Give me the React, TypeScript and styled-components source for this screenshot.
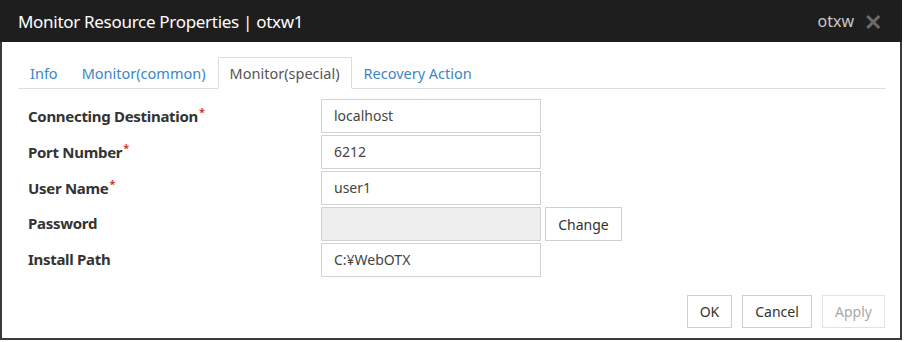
import * as React from 'react';
import styled, { createGlobalStyle } from 'styled-components';

const GlobalStyle = createGlobalStyle`
    html, body {
        margin: 0;
        padding: 0;
        background: #fff;
    }
    body {
        font-family: "Noto Sans", "Liberation Sans", sans-serif;
        color: #333;
    }
`;

const Dialog = styled.div`
    width: 902px;
    height: 340px;
    box-sizing: border-box;
    border: 2px solid #3a3a3a;
    border-top: none;
    display: flex;
    flex-direction: column;
    background: #fff;
`;

const TitleBar = styled.div`
    height: 42px;
    margin: 0 -2px;
    background: #1e1e1e;
    display: flex;
    align-items: center;
    justify-content: space-between;
    padding: 0 20px 0 18px;
`;

const Title = styled.div`
    color: #fff;
    font-size: 17px;
    letter-spacing: -0.3px;
`;

const TitleRight = styled.div`
    display: flex;
    align-items: center;
    gap: 10px;
    color: #c8c8c8;
    font-size: 16px;
`;

const Close = styled.span`
    color: #6a6a6a;
    font-size: 22px;
    font-weight: bold;
    line-height: 1;
`;

const Body = styled.div`
    flex: 1;
    display: flex;
    flex-direction: column;
    padding: 15px 14px 0 16px;
`;

const TabBar = styled.div`
    display: flex;
    border-bottom: 1px solid #ddd;
    height: 31px;
`;

const Tab = styled.div<{ $active?: boolean }>`
    padding: 0 11px;
    font-size: 14.5px;
    line-height: 30px;
    color: ${p => (p.$active ? '#555' : '#3c86c6')};
    border: 1px solid ${p => (p.$active ? '#ddd' : 'transparent')};
    border-bottom: ${p => (p.$active ? '1px solid #fff' : 'none')};
    margin-bottom: ${p => (p.$active ? '-1px' : '0')};
    background: #fff;
`;

const Form = styled.div`
    display: flex;
    flex-direction: column;
    gap: 2px;
    margin-top: 10px;
    padding-left: 10px;
`;

const Row = styled.div`
    display: grid;
    grid-template-columns: 289px 220px auto;
    align-items: center;
    column-gap: 4px;
`;

const Label = styled.div`
    font-size: 15px;
    font-weight: bold;
    color: #333;
    letter-spacing: -0.3px;
    margin-top: -3px;
`;

const Req = styled.sup`
    color: #d9342b;
    font-size: 11px;
    margin-left: 1px;
`;

const Field = styled.div<{ $disabled?: boolean }>`
    height: 34px;
    box-sizing: border-box;
    border: 1px solid #d2d2d2;
    background: ${p => (p.$disabled ? '#eeeeee' : '#fff')};
    padding: 0 12px;
    font-size: 14px;
    line-height: 32px;
    color: #444;
`;

const Button = styled.button<{ $disabled?: boolean; $w: number; $h?: number }>`
    width: ${p => p.$w}px;
    height: ${p => p.$h ?? 33}px;
    box-sizing: border-box;
    border: 1px solid ${p => (p.$disabled ? '#e2e2e2' : '#cfcfcf')};
    background: #fff;
    color: ${p => (p.$disabled ? '#a8a8a8' : '#333')};
    font-family: "Noto Sans", "Liberation Sans", sans-serif;
    font-size: 14px;
    padding: 0;
`;

const Footer = styled.div`
    display: flex;
    justify-content: flex-end;
    gap: 10px;
    margin-top: 18px;
    padding-right: 1px;
`;

const fields = [
    { label: 'Connecting Destination', value: 'localhost', req: true },
    { label: 'Port Number', value: '6212', req: true },
    { label: 'User Name', value: 'user1', req: true },
    { label: 'Password', value: '', disabled: true, change: true },
    { label: 'Install Path', value: 'C:¥WebOTX' },
];

export default function App() {
    return (
        <>
            <GlobalStyle />
            <Dialog>
                <TitleBar>
                    <Title>Monitor Resource Properties | otxw1</Title>
                    <TitleRight>
                        <span>otxw</span>
                        <Close>✕</Close>
                    </TitleRight>
                </TitleBar>
                <Body>
                    <TabBar>
                        <Tab>Info</Tab>
                        <Tab>Monitor(common)</Tab>
                        <Tab $active>Monitor(special)</Tab>
                        <Tab>Recovery Action</Tab>
                    </TabBar>
                    <Form>
                        {fields.map(f => (
                            <Row key={f.label}>
                                <Label>
                                    {f.label}
                                    {f.req && <Req>*</Req>}
                                </Label>
                                <Field $disabled={f.disabled}>{f.value}</Field>
                                {f.change && <Button $w={77} $h={34}>Change</Button>}
                            </Row>
                        ))}
                    </Form>
                    <Footer>
                        <Button $w={45}>OK</Button>
                        <Button $w={70}>Cancel</Button>
                        <Button $w={63} $disabled>Apply</Button>
                    </Footer>
                </Body>
            </Dialog>
        </>
    );
}
